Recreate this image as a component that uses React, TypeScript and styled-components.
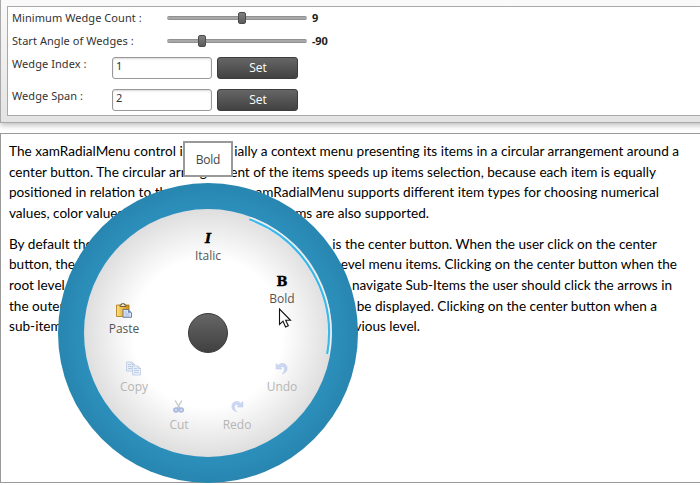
import React from "react";
import styled, { createGlobalStyle, css } from "styled-components";

const Global = createGlobalStyle`
  * { box-sizing: border-box; }
  html, body { margin: 0; background: #fff; }
  body { width: 700px; height: 485px; overflow: hidden; }
`;

const Page = styled.main`
  width: 700px;
  height: 485px;
  overflow: hidden;
  display: flex;
  flex-direction: column;
  background: #fff;
  font-family: "Noto Sans", "Open Sans", sans-serif;
`;

const Options = styled.section`
  flex: none;
  width: 708px;
  height: 123px;
  padding: 6px 0 6px 6px;
  border: solid #a9a9a9;
  border-width: 0 0 1px 1px;
  background: linear-gradient(#fafafa, #e3e3e3);
  box-shadow: 0 2px 6px rgba(0, 0, 0, 0.28);
`;

const OptionsBody = styled.div`
  height: 110px;
  padding-left: 4px;
  border: 1px solid #a9a9a9;
  background: #fff;
`;

const OptionRow = styled.div<{ $height: number }>`
  display: flex;
  align-items: flex-start;
  height: ${(p) => p.$height}px;
`;

const OptionLabel = styled.label<{ $width: number; $raised?: boolean }>`
  flex: none;
  width: ${(p) => p.$width}px;
  padding-top: ${(p) => (p.$raised ? 1 : 3)}px;
  font-size: 11px;
  line-height: 16px;
  letter-spacing: 0.06px;
  white-space: nowrap;
  color: #333;
`;

const Slider = styled.div`
  display: flex;
  align-items: center;
  width: 140px;
  height: 4px;
  margin-top: 9px;
  border-radius: 2px;
  background: linear-gradient(#858585, #b4b4b4 50%, #858585);
`;

const Thumb = styled.span<{ $at: number }>`
  width: 8px;
  height: 12px;
  margin-left: ${(p) => p.$at}px;
  border: 1px solid #4c4c4c;
  border-radius: 2px;
  background: linear-gradient(#808080, #5c5c5c);
`;

const SliderValue = styled.output`
  margin-left: 5px;
  padding-top: 3px;
  font-size: 11px;
  font-weight: 700;
  line-height: 16px;
  letter-spacing: -0.2px;
  color: #222;
`;

const Field = styled.input`
  width: 100px;
  height: 22px;
  margin: 2px 5px 0 0;
  padding: 0 3px 5px;
  border: 1px solid #999;
  border-radius: 3px;
  background: #fff;
  box-shadow: inset 0 1px 2px rgba(0, 0, 0, 0.16);
  color: #333;
  font: 11px "Noto Sans", sans-serif;
  outline: none;
`;

const SetButton = styled.button`
  width: 81px;
  height: 22px;
  margin-top: 2px;
  padding: 0 0 0 1px;
  border: 1px solid #3c3c3c;
  border-radius: 3px;
  background: linear-gradient(#666, #424242);
  color: #fff;
  font: 12px/20px "Open Sans", sans-serif;
`;

const Article = styled.section`
  flex: none;
  position: relative;
  width: 708px;
  height: 350px;
  margin-top: 10px;
  padding: 7px 0 0 8px;
  border: 1px solid #999;
  background: #fff;
  font-family: Lato, sans-serif;
  font-size: 13.6px;
  color: #000;
`;

const Paragraph = styled.p`
  margin: 0 0 10.5px;
`;

/* The two halves of a line sit on either side of the open menu. */
const Line = styled.span<{ $width: number }>`
  display: flex;
  justify-content: space-between;
  width: ${(p) => p.$width}px;
  height: 20.6px;
  line-height: 20.6px;
  white-space: pre;
`;

const RadialMenu = styled.nav`
  position: absolute;
  left: 57px;
  top: 49px;
  width: 300px;
  height: 300px;
  border-radius: 50%;
  font-family: "Open Sans", sans-serif;
`;

const Dial = styled.svg`
  display: block;
  width: 300px;
  height: 300px;
`;

const MenuItem = styled.div<{ $x: number; $y: number; $disabled?: boolean }>`
  position: absolute;
  left: ${(p) => p.$x}px;
  top: ${(p) => p.$y}px;
  width: 60px;
  display: flex;
  flex-direction: column;
  align-items: center;
  font-size: 12px;
  line-height: 16px;
  color: #555;
  ${(p) =>
    p.$disabled &&
    css`
      color: #b5b5b5;
    `}
`;

const Icon = styled.svg<{ $faded?: boolean }>`
  display: block;
  width: 16px;
  height: 16px;
  margin-bottom: 2px;
  opacity: ${(p) => (p.$faded ? 0.42 : 1)};
`;

const FontGlyph = styled.span<{ $italic?: boolean }>`
  width: 16px;
  height: 16px;
  margin-bottom: 2px;
  text-align: center;
  font: ${(p) => (p.$italic ? "italic 700" : "700")} 13px/17px "DejaVu Serif", serif;
  -webkit-text-stroke: 0.4px #000;
  color: #000;
`;

const Caption = styled.span`
  white-space: nowrap;
`;

const Tooltip = styled.div`
  position: absolute;
  left: 182px;
  top: 7px;
  width: 50px;
  height: 36px;
  border: 2px solid #999;
  background: #fff;
  text-align: center;
  font: 12px/34px "Open Sans", sans-serif;
  letter-spacing: -0.2px;
  color: #444;
`;

const Pointer = styled.svg`
  position: absolute;
  left: 277px;
  top: 174px;
  width: 14px;
  height: 21px;
`;

type TextLine = { width: number; start: string; end: string };

const paragraphs: TextLine[][] = [
  [
    { width: 670, start: "The xamRadialMenu control is", end: "ially a context menu presenting its items in a circular arrangement around a" },
    { width: 647, start: "center button. The circular arrang", end: "ent of the items speeds up items selection, because each item is equally" },
    { width: 650, start: "positioned in relation to the", end: "amRadialMenu supports different item types for choosing numerical" },
    { width: 420, start: "values, color values", end: "ms are also supported." },
  ],
  [
    { width: 648, start: "By default the", end: "is the center button. When the user click on the center" },
    { width: 668, start: "button, the", end: "evel menu items. Clicking on the center button when the" },
    { width: 663, start: "root level", end: "navigate Sub-Items the user should click the arrows in" },
    { width: 648, start: "the outer", end: "be displayed. Clicking on the center button when a" },
    { width: 411, start: "sub-items", end: "vious level." },
  ],
];

const PasteIcon = () => (
  <Icon viewBox="0 0 16 16">
    <defs>
      <linearGradient id="board" x1="0" x2="1">
        <stop offset="0" stopColor="#ffe27a" />
        <stop offset="1" stopColor="#d08c10" />
      </linearGradient>
    </defs>
    <path d="M.500 2h12.500v11.500H.500z" fill="url(#board)" stroke="#a67612" strokeWidth=".8" />
    <path d="M4 3.500V2h1.500V.700h3V2H10v1.500z" fill="#eee8d2" stroke="#5a4a25" strokeWidth=".8" />
    <path d="M7 6.500h5l3.500 3.300v4.500H7z" fill="#dce7f8" stroke="#4d658d" strokeWidth=".8" />
    <path d="M12 6.500v3.300h3.500z" fill="#6f8cba" />
    <path d="M8.500 9h2.500M8.500 11h5M8.500 13h5" stroke="#92a9cf" strokeWidth=".8" />
  </Icon>
);

const CopyIcon = () => (
  <Icon viewBox="0 0 16 16" $faded>
    <g fill="#d4e2f9" stroke="#6a8cc8" strokeWidth=".8">
      <path d="M.500 1h5.500L8.500 3.500V10H.500z" />
      <path d="M6.500 5H12l2.500 2.500V14h-8z" />
    </g>
    <path d="M2 3.500h3M2 5.500h4M2 7.500h4M8 7.500h3M8 9.500h5M8 11.500h5M6 1v2.500h2.500M12 5v2.500h2.500" fill="none" stroke="#5c82c6" strokeWidth=".9" />
  </Icon>
);

const CutIcon = () => (
  <Icon viewBox="0 0 16 16" $faded>
    <path d="M4 1.500 9.300 9.500M11 1.500 5.900 9.500" stroke="#76787c" strokeWidth="1.300" />
    <g fill="none" stroke="#3e63bd" strokeWidth="1.900">
      <ellipse cx="5" cy="11" rx="1.900" ry="1.700" />
      <ellipse cx="10.200" cy="11" rx="1.900" ry="1.700" />
    </g>
    <path d="M6.500 9.300h2.300" stroke="#3e63bd" strokeWidth="1.500" />
  </Icon>
);

const TurnIcon = ({ redo }: { redo?: boolean }) => (
  <Icon viewBox="0 0 16 16" $faded>
    <path
      transform={redo ? "translate(16 0) scale(-1 1)" : undefined}
      d="M2 2.500v5.500h6L6.300 6.300C8 4.700 10.600 5.500 10.500 8.300c0 2-1 3.500-2.500 4.500C11.800 12 13.600 9.500 13 6.300 12.300 2 7 1.200 4.200 4.400z"
      fill="#8aa5e6"
      stroke="#6684d2"
      strokeWidth=".5"
    />
  </Icon>
);

export default function App() {
  return (
    <>
      <Global />
      <Page>
        <Options>
          <OptionsBody>
            <OptionRow $height={23}>
              <OptionLabel $width={155}>Minimum Wedge Count :</OptionLabel>
              <Slider><Thumb $at={71} /></Slider>
              <SliderValue>9</SliderValue>
            </OptionRow>
            <OptionRow $height={25}>
              <OptionLabel $width={155}>Start Angle of Wedges :</OptionLabel>
              <Slider><Thumb $at={31} /></Slider>
              <SliderValue>-90</SliderValue>
            </OptionRow>
            <OptionRow $height={32}>
              <OptionLabel $width={100} $raised>Wedge Index :</OptionLabel>
              <Field defaultValue="1" />
              <SetButton>Set</SetButton>
            </OptionRow>
            <OptionRow $height={28}>
              <OptionLabel $width={100} $raised>Wedge Span :</OptionLabel>
              <Field defaultValue="2" />
              <SetButton>Set</SetButton>
            </OptionRow>
          </OptionsBody>
        </Options>
        <Article>
          {paragraphs.map((lines, p) => (
            <Paragraph key={p}>
              {lines.map((l) => (
                <Line key={l.start} $width={l.width}>
                  <span>{l.start}</span>
                  <span>{l.end}</span>
                </Line>
              ))}
            </Paragraph>
          ))}
          <RadialMenu>
            <Dial viewBox="0 0 300 300">
              <defs>
                <radialGradient id="ring">
                  <stop offset=".82" stopColor="#2c90bc" />
                  <stop offset="1" stopColor="#2886b0" />
                </radialGradient>
                <radialGradient id="face">
                  <stop offset=".6" stopColor="#fff" />
                  <stop offset="1" stopColor="#dedede" />
                </radialGradient>
                <linearGradient id="hub" x2="0" y2="1">
                  <stop stopColor="#666" />
                  <stop offset="1" stopColor="#404040" />
                </linearGradient>
              </defs>
              <circle cx="150" cy="150" r="150" fill="url(#ring)" />
              <circle cx="150" cy="150" r="124" fill="url(#face)" />
              <path d="M191.550 35.830A121.500 121.500 0 0 1 269.650 171.100" fill="none" stroke="#eef1f3" strokeWidth="4" />
              <path d="M191.380 36.300A121 121 0 0 1 269.160 171.010" fill="none" stroke="#3bb7eb" strokeWidth="2.200" />
              <circle cx="150" cy="150" r="19.500" fill="url(#hub)" stroke="#3c3c3c" />
            </Dial>
            <MenuItem $x={120} $y={47}><FontGlyph $italic>I</FontGlyph><Caption>Italic</Caption></MenuItem>
            <MenuItem $x={194} $y={90}><FontGlyph>B</FontGlyph><Caption>Bold</Caption></MenuItem>
            <MenuItem $x={36} $y={120}><PasteIcon /><Caption>Paste</Caption></MenuItem>
            <MenuItem $x={46} $y={178} $disabled><CopyIcon /><Caption>Copy</Caption></MenuItem>
            <MenuItem $x={91} $y={216} $disabled><CutIcon /><Caption>Cut</Caption></MenuItem>
            <MenuItem $x={149} $y={216} $disabled><TurnIcon redo /><Caption>Redo</Caption></MenuItem>
            <MenuItem $x={194} $y={178} $disabled><TurnIcon /><Caption>Undo</Caption></MenuItem>
          </RadialMenu>
          <Tooltip>Bold</Tooltip>
          <Pointer viewBox="0 0 14 21">
            <path d="M1.500 1v15.500l3.500-3.300 2.600 5.800 2.700-1.200-2.600-5.500h4.800z" fill="#fff" stroke="#111" strokeWidth="1.100" />
          </Pointer>
        </Article>
      </Page>
    </>
  );
}
